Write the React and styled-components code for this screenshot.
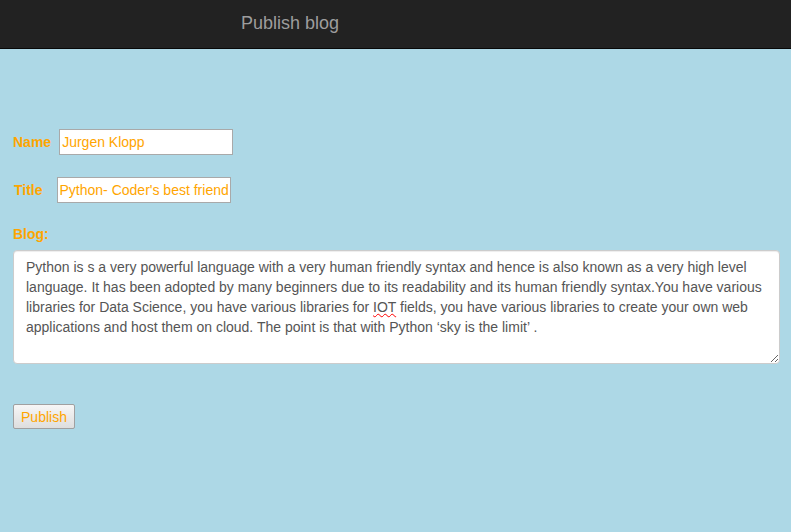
import React, { useState } from 'react';
import styled, { createGlobalStyle } from 'styled-components';

const GlobalStyle = createGlobalStyle`
  html, body {
    margin: 0;
    padding: 0;
    background: #add8e6;
    font-family: "Liberation Sans", Arial, sans-serif;
  }
`;

const Page = styled.div`
  min-height: 532px;
  background: #add8e6;
`;

const NavBar = styled.div`
  height: 48px;
  background: #222;
  border-bottom: 1px solid #080808;
  display: flex;
  align-items: center;
  padding-left: 241px;
  box-sizing: content-box;
`;

const Brand = styled.span`
  color: #9d9d9d;
  font-size: 18px;
  line-height: 20px;
  margin-top: -2px;
`;

const Form = styled.form`
  display: flex;
  flex-direction: column;
  padding: 80px 11px 0 13px;
`;

const Row = styled.div`
  display: flex;
  align-items: center;
  margin-bottom: ${p => p.gap || 0}px;
`;

const Label = styled.label`
  color: orange;
  font-weight: bold;
  font-size: 14px;
  margin-left: ${p => p.indent || 0}px;
  margin-right: ${p => p.space || 8}px;
`;

const TextInput = styled.input`
  width: 174px;
  height: 26px;
  box-sizing: border-box;
  border: 1px solid #a9a9a9;
  padding: 1px 2px;
  font-family: "Liberation Sans", Arial, sans-serif;
  font-size: 14px;
  color: orange;
  background: #fff;
  outline: none;
`;

const BlogLabel = styled.label`
  color: orange;
  font-weight: bold;
  font-size: 14px;
  line-height: 16px;
  margin: 0 0 8px;
`;

const BlogArea = styled.div`
  height: 114px;
  box-sizing: border-box;
  padding: 6px 12px;
  background: #fff;
  border: 1px solid #ccc;
  border-radius: 4px;
  box-shadow: inset 0 1px 1px rgba(0, 0, 0, 0.075);
  color: #555;
  font-size: 14px;
  line-height: 20px;
  overflow: auto;
  resize: both;
`;

const Misspelt = styled.span`
  text-decoration: underline wavy red;
  text-decoration-thickness: 1px;
`;

const PublishButton = styled.button`
  align-self: flex-start;
  margin-top: 40px;
  width: 62px;
  height: 25px;
  padding: 0;
  font-family: "Liberation Sans", Arial, sans-serif;
  font-size: 14px;
  color: orange;
  background: linear-gradient(#f6f6f6, #dedede);
  border: 1px solid #a0a0a0;
  border-radius: 2px;
  cursor: pointer;
`;

export default function App() {
  const [name, setName] = useState('Jurgen Klopp');
  const [title, setTitle] = useState("Python- Coder's best friend");

  return (
    <Page>
      <GlobalStyle />
      <NavBar>
        <Brand>Publish blog</Brand>
      </NavBar>
      <Form onSubmit={e => e.preventDefault()}>
        <Row gap={22}>
          <Label htmlFor="name">Name</Label>
          <TextInput id="name" value={name} onChange={e => setName(e.target.value)} />
        </Row>
        <Row gap={23}>
          <Label htmlFor="title" indent={1} space={14}>Title</Label>
          <TextInput id="title" value={title} onChange={e => setTitle(e.target.value)} />
        </Row>
        <BlogLabel>Blog:</BlogLabel>
        <BlogArea>
          Python is s a very powerful language with a very human friendly syntax and hence is also known as a very high level language. It has been adopted by many beginners due to its readability and its human friendly syntax.You have various libraries for Data Science, you have various libraries for <Misspelt>IOT</Misspelt> fields, you have various libraries to create your own web applications and host them on cloud. The point is that with Python ‘sky is the limit’ .
        </BlogArea>
        <PublishButton type="submit">Publish</PublishButton>
      </Form>
    </Page>
  );
}
